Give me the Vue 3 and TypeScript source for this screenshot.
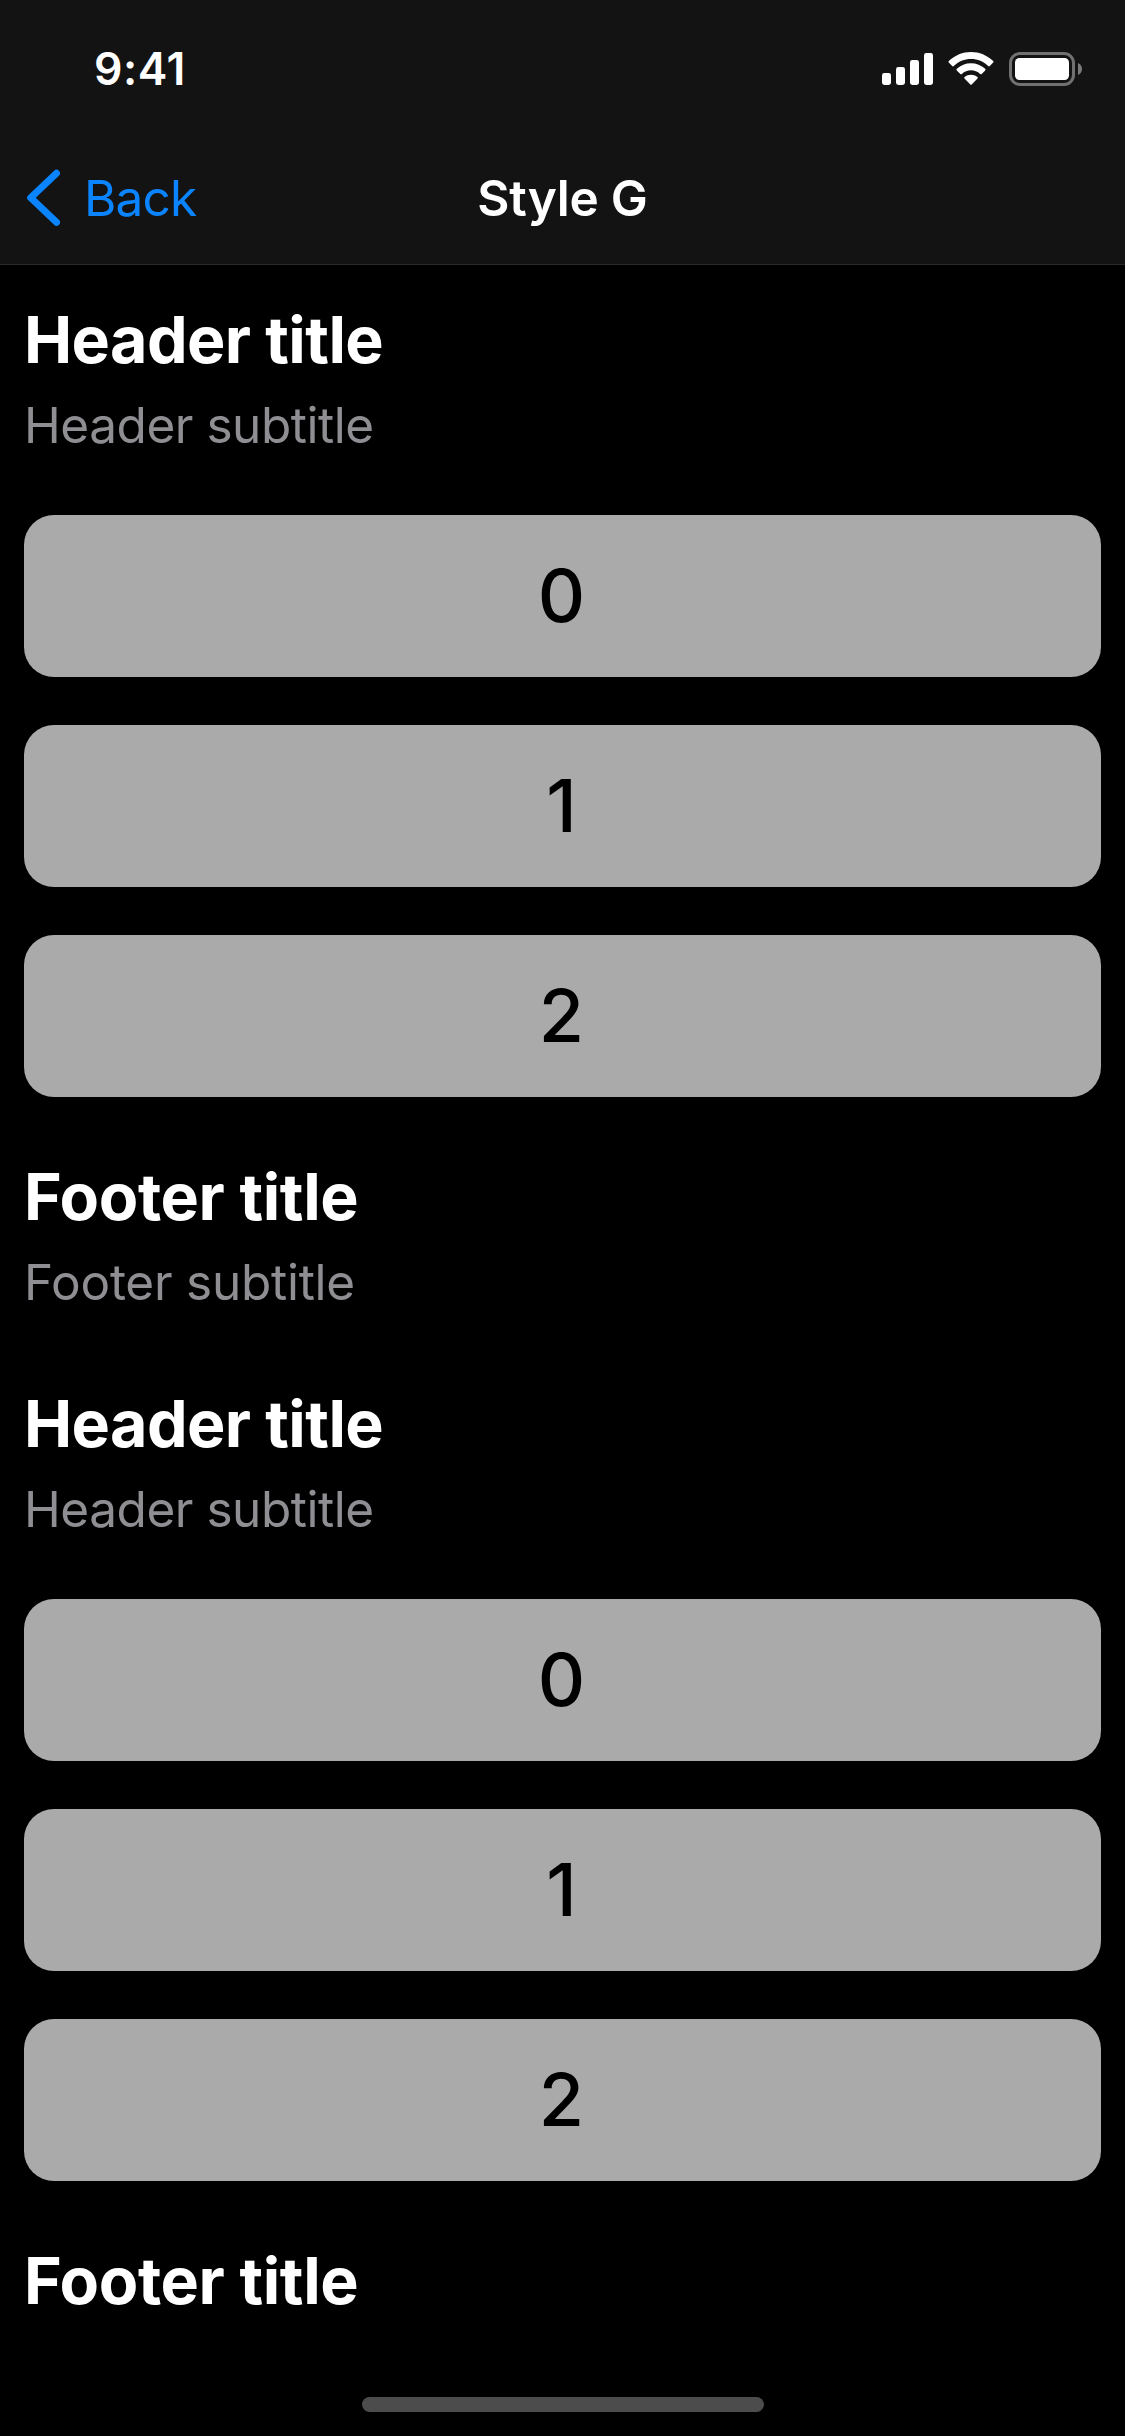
<script setup lang="ts">
interface Section {
  id: number
  items: number[]
  hasFooterSubtitle: boolean
}

const sections: Section[] = [
  { id: 0, items: [0, 1, 2], hasFooterSubtitle: true },
  { id: 1, items: [0, 1, 2], hasFooterSubtitle: false },
]
</script>

<template>
  <div class="screen">
    <header class="top">
      <div class="status">
        <span class="time">9:41</span>
        <div class="indicators">
          <svg class="signal" width="51" height="34" viewBox="0 0 51 34" fill="#fff">
            <rect x="0" y="21" width="9" height="12" rx="2.4" />
            <rect x="14" y="15" width="9" height="18" rx="2.4" />
            <rect x="28" y="8" width="9" height="25" rx="2.4" />
            <rect x="42" y="1" width="9" height="32" rx="2.4" />
          </svg>
          <svg class="wifi" width="46" height="34" viewBox="0 0 46 34" fill="#fff">
            <path d="M23 7 C29.6 7 35.7 9.6 40.2 14 Q41 14.8 41.8 14 L45.2 10.6 Q46 9.8 45.2 9 C39.2 3.3 31.3 0 23 0 C14.7 0 6.8 3.3 .8 9 Q0 9.8 .8 10.6 L4.2 14 Q5 14.8 5.8 14 C10.3 9.6 16.4 7 23 7 Z" />
            <path d="M23 18.3 C26.4 18.3 29.6 19.6 32.1 21.9 Q32.9 22.7 33.7 21.9 L37.2 18.5 Q38 17.6 37.2 16.8 C33.3 13.2 28.3 11.2 23 11.2 C17.7 11.2 12.7 13.2 8.8 16.8 Q8 17.6 8.8 18.5 L12.3 21.9 Q13.1 22.7 13.9 21.9 C16.4 19.6 19.6 18.3 23 18.3 Z" />
            <path d="M29.5 26.5 Q30.3 25.7 29.4 24.9 C25.7 21.9 20.3 21.9 16.6 24.9 Q15.7 25.7 16.5 26.5 L22.3 32.4 Q23 33.1 23.7 32.4 Z" />
          </svg>
          <svg class="battery" width="74" height="34" viewBox="0 0 74 34">
            <rect x="1.5" y="1.5" width="63" height="31" rx="9.5" fill="none" stroke="#717171" stroke-width="3" />
            <rect x="6" y="6" width="54" height="22" rx="4.5" fill="#fff" />
            <path d="M69 11 C71.4 12 73 14.3 73 17 C73 19.7 71.4 22 69 23 Z" fill="#7a7a7a" />
          </svg>
        </div>
      </div>
      <nav class="nav">
        <a class="back">
          <svg width="36" height="60" viewBox="0 0 36 60" fill="none" stroke="#0a84ff" stroke-width="7" stroke-linecap="round" stroke-linejoin="round">
            <path d="M32.5 5.3 L6.7 29.8 L32.5 54.3" />
          </svg>
          <span class="back-label">Back</span>
        </a>
        <h1 class="nav-title">Style G</h1>
      </nav>
    </header>

    <main class="list">
      <section v-for="section in sections" :key="section.id" class="section">
        <div class="heading">
          <h2 class="title">Header title</h2>
          <p class="subtitle">Header subtitle</p>
        </div>
        <div class="cards">
          <div v-for="item in section.items" :key="item" class="card">{{ item }}</div>
        </div>
        <div class="heading">
          <h2 class="title footer-title">Footer title</h2>
          <p v-if="section.hasFooterSubtitle" class="subtitle footer-subtitle">Footer subtitle</p>
        </div>
      </section>
    </main>

    <div class="home-bar"></div>
  </div>
</template>

<style>
body {
  margin: 0;
  background: #000;
}
</style>

<style scoped>
.screen {
  position: relative;
  width: 1125px;
  height: 2436px;
  overflow: hidden;
  background: #000;
  color: #fff;
  font-family: Inter, "Liberation Sans", sans-serif;
}

.top {
  box-sizing: border-box;
  height: 265px;
  background: #131313;
  border-bottom: 1px solid #2a2a2a;
}

.status {
  box-sizing: border-box;
  display: flex;
  justify-content: space-between;
  height: 132px;
  padding: 39px 42px 0 94px;
}

.time {
  font-size: 44.5px;
  line-height: 60px;
  font-weight: 600;
  letter-spacing: 0.5px;
}

.indicators {
  display: flex;
  padding-top: 13px;
}

.wifi {
  margin-left: 15px;
}

.battery {
  margin-left: 15px;
}

.nav {
  display: grid;
  grid-template-columns: 1fr auto 1fr;
  height: 132px;
}

.back {
  display: flex;
  padding-left: 24px;
  color: #0a84ff;
}

.back svg {
  margin-top: 36px;
}

.back-label {
  margin: 36px 0 0 24px;
  font-size: 49.5px;
  line-height: 60px;
  letter-spacing: -0.8px;
}

.nav-title {
  margin: 36px 0 0;
  font-size: 49.5px;
  line-height: 60px;
  font-weight: 600;
  letter-spacing: -0.2px;
}

.list {
  display: flex;
  flex-direction: column;
  gap: 72px;
  padding: 35px 24px 0;
}

.section {
  display: flex;
  flex-direction: column;
  gap: 60px;
}

.heading {
  display: flex;
  flex-direction: column;
  gap: 15px;
}

.title {
  margin: 0;
  font-size: 64.5px;
  line-height: 80px;
  font-weight: 700;
  letter-spacing: -0.58px;
}

.footer-title {
  letter-spacing: -0.38px;
}

.subtitle {
  margin: 0;
  font-size: 49.5px;
  line-height: 60px;
  letter-spacing: -0.46px;
  color: #8e8e93;
}

.footer-subtitle {
  letter-spacing: -0.25px;
}

.cards {
  display: flex;
  flex-direction: column;
  gap: 48px;
}

.card {
  box-sizing: border-box;
  height: 162px;
  padding-right: 2px;
  border-radius: 30px;
  background: #aaa;
  color: #000;
  font-size: 73.5px;
  line-height: 162px;
  font-weight: 500;
  text-align: center;
}

.home-bar {
  position: absolute;
  left: 362px;
  bottom: 24px;
  width: 402px;
  height: 15px;
  border-radius: 8px;
  background: #4c4c4c;
}
</style>
